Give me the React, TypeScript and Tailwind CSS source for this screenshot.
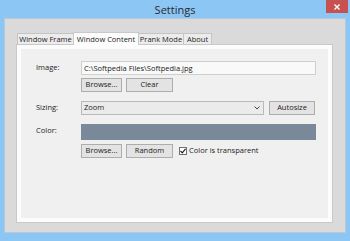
import React from "react";

const font = { fontFamily: '"Open Sans", "Noto Sans", sans-serif' };

const Btn = ({ label, w }: { label: string; w: string }) => (
    <div className={`${w} h-[14px] flex items-center justify-center bg-[#e3e3e3] border border-[#adadad] text-[7.5px] text-[#222]`}>
        {label}
    </div>
);

const App = () => {
    const tabs = [
        { label: "Window Frame", w: "w-[57px]" },
        { label: "Window Content", w: "w-[66px]" },
        { label: "Prank Mode", w: "w-[46px]" },
        { label: "About", w: "w-[29px]" },
    ];

    return (
        <div style={font} className="w-[350px] h-[241px] bg-[#8cc6f5] flex flex-col overflow-hidden">
            {/* title bar */}
            <div className="h-[18px] flex items-start">
                <div className="w-[24px]" />
                <div className="flex-1 text-center text-[11px] leading-[20px] text-[#2b2b2b]">Settings</div>
                <div className="w-[22px] h-[13px] mr-[2px] bg-[#c75050] flex items-center justify-center">
                    <svg width="6" height="6" viewBox="0 0 6 6">
                        <path d="M0.5 0.5 L5.5 5.5 M5.5 0.5 L0.5 5.5" stroke="#fff" strokeWidth="1.4" />
                    </svg>
                </div>
            </div>

            {/* client area */}
            <div className="flex-1 mx-[4px] mb-[8px] bg-[#dadada] border border-[#b9c9d9] pt-[12px] pl-[11px] pr-[12px] pb-[9px] flex flex-col">
                <div className="flex items-end h-[13px] pl-[1px]">
                    {tabs.map((t, i) => (
                        <div
                            key={t.label}
                            className={
                                i === 1
                                    ? `${t.w} h-[13px] text-center bg-[#fcfcfc] border border-b-0 border-[#c9c9c9] text-[7.5px] leading-[12px] text-[#222] -ml-[1px] -mb-[1px] relative z-10`
                                    : `${t.w} h-[11px] text-center bg-[#ececec] border border-b-0 border-[#c4c4c4] text-[7.5px] leading-[10px] text-[#222] -ml-[1px] first:ml-0`
                            }
                        >
                            {t.label}
                        </div>
                    ))}
                </div>
                <div className="flex-1 bg-[#fcfcfc] border border-[#c9c9c9] p-[4px] flex">
                    <div className="flex-1 bg-[#f0f0f0] pt-[12px] pl-[15px] text-[7.5px] text-[#222]">
                        {/* image */}
                        <div className="flex">
                            <div className="w-[45px] pt-[1px] leading-[10px]">Image:</div>
                            <div className="flex flex-col gap-[3px]">
                                <div className="w-[235px] h-[14px] bg-[#f9f9f9] border border-[#cfcfcf] px-[2px] leading-[12px]">
                                    C:\Softpedia Files\Softpedia.jpg
                                </div>
                                <div className="flex gap-[4px]">
                                    <Btn label="Browse..." w="w-[41px]" />
                                    <Btn label="Clear" w="w-[47px]" />
                                </div>
                            </div>
                        </div>

                        {/* sizing */}
                        <div className="flex mt-[9px]">
                            <div className="w-[45px] pt-[1px] leading-[10px]">Sizing:</div>
                            <div className="flex gap-[5px]">
                                <div className="w-[183px] h-[14px] bg-[#ebebeb] border border-[#b9b9b9] pl-[2px] pr-[3px] flex items-center justify-between">
                                    <span>Zoom</span>
                                    <svg width="6" height="4" viewBox="0 0 6 4">
                                        <path d="M0.5 0.5 L3 3 L5.5 0.5" stroke="#444" strokeWidth="1" fill="none" />
                                    </svg>
                                </div>
                                <Btn label="Autosize" w="w-[46px]" />
                            </div>
                        </div>

                        {/* color */}
                        <div className="flex mt-[9px]">
                            <div className="w-[45px] pt-[1px] leading-[10px]">Color:</div>
                            <div className="flex flex-col gap-[4px]">
                                <div className="w-[235px] h-[16px] bg-[#7a8999]" />
                                <div className="flex items-center gap-[4px]">
                                    <Btn label="Browse..." w="w-[41px]" />
                                    <Btn label="Random" w="w-[47px]" />
                                    <div className="ml-[2px] w-[8px] h-[8px] bg-white border border-[#707070] flex items-center justify-center">
                                        <svg width="6" height="6" viewBox="0 0 6 6">
                                            <path d="M0.5 3 L2.3 4.8 L5.5 0.8" stroke="#222" strokeWidth="1.2" fill="none" />
                                        </svg>
                                    </div>
                                    <span className="-ml-[2px]">Color is transparent</span>
                                </div>
                            </div>
                        </div>
                    </div>
                </div>
            </div>
        </div>
    );
};

export default App;
